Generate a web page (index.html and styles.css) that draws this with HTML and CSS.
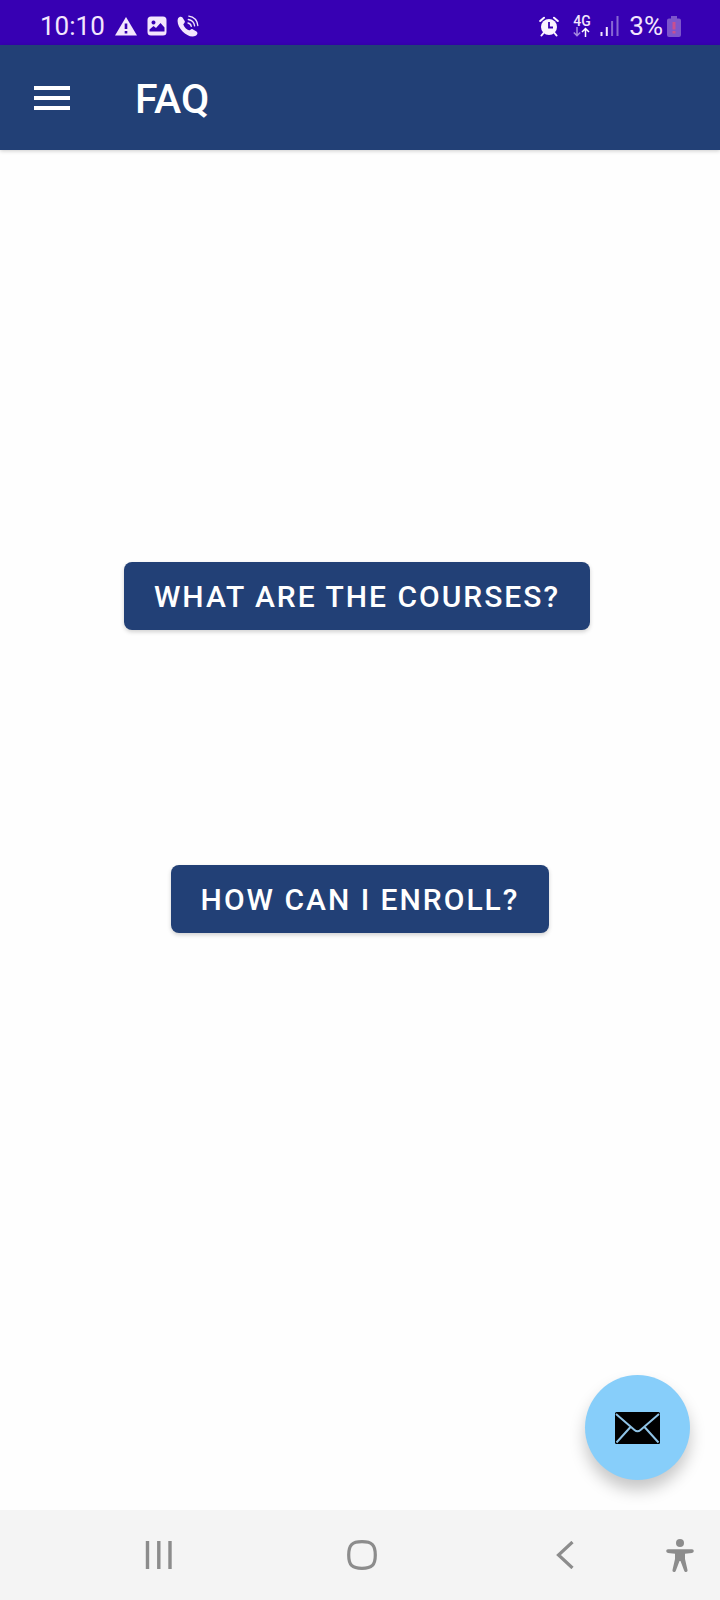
FILE: index.html
```html
<!DOCTYPE html>
<html lang="en">
<head>
<meta charset="utf-8">
<meta name="viewport" content="width=device-width, initial-scale=1">
<title>FAQ</title>
<link rel="stylesheet" href="styles.css">
</head>
<body>
<div class="screen">
  <div class="status">
    <div class="status-left">
      <span class="clock">10:10</span>
      <svg width="22" height="20" viewBox="0 0 22 20"><path fill="#f3e6fd" d="M11 1 22 19.500H0z"/><path stroke="#3a00b3" stroke-width="2.600" d="M11 7.500v5.500M11 15v2.600"/></svg>
      <svg width="20" height="20" viewBox="0 0 20 20"><path fill="#f3e6fd" fill-rule="evenodd" d="M4 .5h12A3.500 3.500 0 0 1 19.500 4v12a3.500 3.500 0 0 1-3.500 3.500H4A3.500 3.500 0 0 1 .5 16V4A3.500 3.500 0 0 1 4 .5zM2.500 15.500h15V11.500l-4-4.500-4.500 5L6.500 10l-4 3.500zM6.500 4.500a2 2 0 1 0 .01 0z"/></svg>
      <svg width="22" height="22" viewBox="0 0 22 22"><path fill="#f3e6fd" d="M1 3.500C2 1.500 4.300 1 5.500 2.500L7.800 6.200C8.300 7.700 6.500 8.500 6.300 9.500c1 2.800 3.400 5 5.700 5.800 1 .2 2-1.600 3.200-1.300l4.300 2.500c1.600 1.200 1 3-.8 4.300C11.500 25-2 12 1 3.500z"/><g fill="none" stroke="#f3e6fd" stroke-width="1.300" stroke-linecap="round"><path d="M11 8q2.700.5 3.300 3.300M11.300 4.500q5.500.8 6.300 6.400M11.800 1.200q8 1.200 9 9.300"/></g></svg>
    </div>
    <div class="status-right">
      <svg width="20" height="21" viewBox="0 0 20 21"><g fill="none" stroke="#fbf3ff" stroke-width="2" stroke-linecap="round"><path d="M1.200 5 5 1.700M18.800 5 15 1.700M4.500 17l-2 2.500M15.500 17l2 2.500"/></g><circle cx="10" cy="11" r="8" fill="#fbf3ff"/><path fill="none" stroke="#3a00b3" stroke-width="1.800" d="M10 6v5.500h4"/></svg>
      <div class="network"><span>4G</span>
        <svg width="17" height="10" viewBox="0 0 17 10" fill="none" stroke-width="1.500"><path stroke="#a78be0" d="M4 0v8.500M.8 5.500 4 8.700l3.200-3.200"/><path stroke="#fff" d="M12.500 10V1.500M9 5l3.500-3.500L16 5"/></svg>
      </div>
      <svg width="19" height="20" viewBox="0 0 19 20"><path stroke="#f3e6fd" stroke-width="2" d="M1.500 20v-4M6.800 20v-9"/><path stroke="#8868d3" stroke-width="2" d="M12.100 20V5M17.500 20V0"/></svg>
      <span class="clock">3%</span>
      <svg class="battery" width="14" height="21" viewBox="0 0 14 21"><path fill="#7d55cb" d="M4 0h6v2.500h2a2 2 0 0 1 2 2V19a2 2 0 0 1-2 2H2a2 2 0 0 1-2-2V4.500a2 2 0 0 1 2-2h2z"/><path stroke="#c84f91" stroke-width="3" d="M7 6v7.500M7 15v2.500"/></svg>
    </div>
  </div>
  <header class="appbar">
    <button class="icon-button" aria-label="Open menu"><svg width="36" height="24" viewBox="0 0 36 24"><path stroke="#fff" stroke-width="4" d="M0 2h36M0 12h36M0 22h36"/></svg></button>
    <h1 class="title">FAQ</h1>
  </header>
  <main class="content">
    <button class="question question-courses">WHAT ARE THE COURSES?</button>
    <button class="question">HOW CAN I ENROLL?</button>
    <button class="fab" aria-label="Send email"><svg width="45" height="32" viewBox="0 0 45 32"><rect width="45" height="32" rx="1.500" fill="#000"/><path fill="none" stroke="#8fc3e6" stroke-width="2" d="M1 2 19.500 18q3 2.500 6 0L44 2M1.500 30.500 15.500 15M43.500 30.500 29.500 15"/></svg></button>
  </main>
  <nav class="navbar" aria-label="System navigation">
    <button class="icon-button" aria-label="Recent apps"><svg width="28" height="28" viewBox="0 0 28 28"><path stroke="#8c8c8c" stroke-width="3.400" d="M2.500 0v28M13.800 0v28M25 0v28"/></svg></button>
    <button class="icon-button" aria-label="Home"><svg width="30" height="30" viewBox="0 0 30 30"><path fill="none" stroke="#8c8c8c" stroke-width="3.200" d="M15 1.700c10 0 13.300 3.300 13.300 13.300S25 28.300 15 28.300 1.700 25 1.700 15 5 1.700 15 1.700z"/></svg></button>
    <button class="icon-button" aria-label="Back"><svg width="18" height="28" viewBox="0 0 18 28"><path fill="none" stroke="#8c8c8c" stroke-width="3.200" d="M16.500 1 2.500 14l14 13"/></svg></button>
    <button class="icon-button accessibility" aria-label="Accessibility"><svg width="28" height="33" viewBox="0 0 28 33"><circle cx="14" cy="4" r="4" fill="#8c8c8c"/><path fill="#8c8c8c" d="M2 10.300h24a1.800 1.800 0 0 1 0 3.600l-7 .8v5.300l2.500 11a1.700 1.700 0 0 1-3.300.8L14.500 22h-1L9.800 31.800a1.700 1.700 0 0 1-3.300-.8L9 20v-5.300L2 13.900a1.800 1.800 0 0 1 0-3.600z"/></svg></button>
  </nav>
</div>
</body>
</html>
```
FILE: styles.css
```css
* {
  box-sizing: border-box;
}

body {
  margin: 0;
  background: #fefefe;
  font-family: Roboto, "Liberation Sans", sans-serif;
}

button {
  border: 0;
  margin: 0;
  font-family: inherit;
}

svg {
  display: block;
  flex: none;
}

.screen {
  min-height: 100vh;
  display: flex;
  flex-direction: column;
}

.status {
  display: flex;
  justify-content: space-between;
  align-items: center;
  padding: 7px 39px 0 40px;
  height: 45px;
  background: #3700b3;
}

.status-left,
.status-right {
  display: flex;
  align-items: center;
  gap: 10px;
}

.clock {
  font-size: 26px;
  line-height: 36px;
  color: #f3e6fd;
}

.network {
  width: 17px;
  margin-left: 4px;
  font-size: 14px;
  font-weight: 500;
  line-height: 12px;
  color: #f3e6fd;
}

.battery {
  margin-left: -6px;
}

.appbar {
  display: flex;
  align-items: center;
  gap: 65px;
  height: 105px;
  padding: 0 34px;
  background: #224076;
  box-shadow: 0 1px 4px rgba(0, 0, 0, 0.2);
}

.icon-button {
  display: grid;
  place-items: center;
  padding: 0;
  background: none;
}

.title {
  margin: 0;
  padding-top: 2px;
  font-size: 41px;
  font-weight: 500;
  line-height: 48px;
  color: #fff;
}

.content {
  position: relative;
  flex: 1;
  display: flex;
  flex-direction: column;
  align-items: center;
  gap: 235px;
  padding: 412px 16px 160px;
}

.question {
  padding: 17px 30px 15px;
  border-radius: 8px;
  background: #224076;
  color: #fff;
  font-size: 30px;
  font-weight: 500;
  line-height: 36px;
  letter-spacing: 2px;
  box-shadow: 0 2px 4px rgba(0, 0, 0, 0.18);
}

.question-courses {
  margin-right: 6px;
}

.fab {
  position: absolute;
  right: 30px;
  bottom: 30px;
  display: grid;
  place-items: center;
  width: 105px;
  height: 105px;
  padding: 0;
  border-radius: 50%;
  background: #87cefa;
  box-shadow: 0 10px 16px rgba(0, 0, 0, 0.22);
}

.navbar {
  display: grid;
  grid-template-columns: 15fr 15fr 15fr 4fr;
  align-items: center;
  height: 90px;
  padding-left: 8%;
  background: #f4f4f4;
}

.accessibility {
  justify-self: start;
}
```
